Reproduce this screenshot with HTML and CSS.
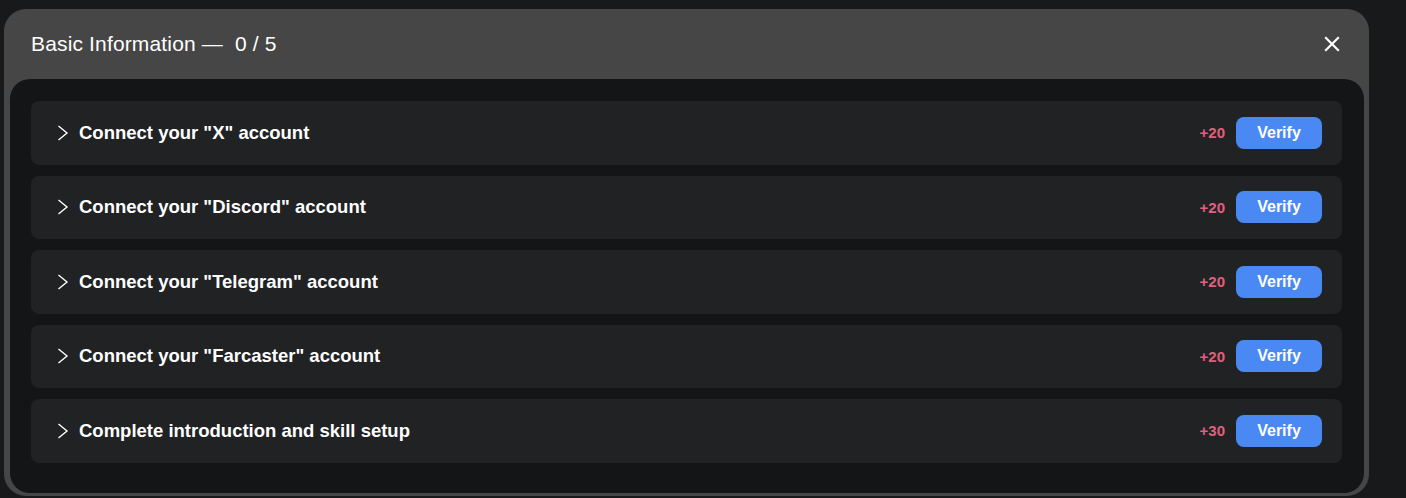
FILE: index.html
```html
<!DOCTYPE html>
<html lang="en">
<head>
    <meta charset="UTF-8">
    <meta name="viewport" content="width=device-width, initial-scale=1.0">
    <title>Basic Information</title>
    <link rel="stylesheet" href="styles.css">
</head>
<body>
    <div class="modal">
        <div class="modal-header">
            <h2>Basic Information &mdash;&nbsp; 0 / 5</h2>
            <button class="modal-close" aria-label="Close">
                <svg width="16" height="16" viewBox="0 0 16 16"><path d="M2 2 L14 14 M14 2 L2 14" stroke="#fff" stroke-width="2.2" stroke-linecap="square"/></svg>
            </button>
        </div>
        <div class="modal-body">
            <div class="task">
                <svg class="chevron" width="12" height="16" viewBox="0 0 12 16"><path d="M1.5 1 L10 8 L1.5 15" fill="none" stroke="#fff" stroke-width="1.4"/></svg>
                <span class="task-title">Connect your "X" account</span>
                <span class="task-points">+20</span>
                <button class="verify">Verify</button>
            </div>
            <div class="task">
                <svg class="chevron" width="12" height="16" viewBox="0 0 12 16"><path d="M1.5 1 L10 8 L1.5 15" fill="none" stroke="#fff" stroke-width="1.4"/></svg>
                <span class="task-title">Connect your "Discord" account</span>
                <span class="task-points">+20</span>
                <button class="verify">Verify</button>
            </div>
            <div class="task">
                <svg class="chevron" width="12" height="16" viewBox="0 0 12 16"><path d="M1.5 1 L10 8 L1.5 15" fill="none" stroke="#fff" stroke-width="1.4"/></svg>
                <span class="task-title">Connect your "Telegram" account</span>
                <span class="task-points">+20</span>
                <button class="verify">Verify</button>
            </div>
            <div class="task">
                <svg class="chevron" width="12" height="16" viewBox="0 0 12 16"><path d="M1.5 1 L10 8 L1.5 15" fill="none" stroke="#fff" stroke-width="1.4"/></svg>
                <span class="task-title">Connect your "Farcaster" account</span>
                <span class="task-points">+20</span>
                <button class="verify">Verify</button>
            </div>
            <div class="task">
                <svg class="chevron" width="12" height="16" viewBox="0 0 12 16"><path d="M1.5 1 L10 8 L1.5 15" fill="none" stroke="#fff" stroke-width="1.4"/></svg>
                <span class="task-title">Complete introduction and skill setup</span>
                <span class="task-points">+30</span>
                <button class="verify">Verify</button>
            </div>
        </div>
    </div>
</body>
</html>
```

FILE: styles.css
```css
* {
    margin: 0;
    padding: 0;
    box-sizing: border-box;
}

body {
    font-family: 'Liberation Sans', Arial, sans-serif;
    background-color: #18191b;
    color: #fff;
    padding: 9px 0 0 4px;
    height: 498px;
    overflow: hidden;
}

.modal {
    width: 1365px;
    height: 487px;
    background-color: #464646;
    border-radius: 22px;
    padding: 0 5px 3px 6px;
    display: flex;
    flex-direction: column;
}

.modal-header {
    height: 70px;
    display: flex;
    align-items: center;
    justify-content: space-between;
    padding: 0 20px 0 21px;
}

.modal-header h2 {
    font-size: 21px;
    font-weight: normal;
    letter-spacing: 0.15px;
    color: #fff;
}

.modal-close {
    background: none;
    border: none;
    cursor: pointer;
    width: 24px;
    height: 24px;
    display: flex;
    align-items: center;
    justify-content: center;
}

.modal-body {
    flex: 1;
    background-color: #141517;
    border-radius: 20px;
    padding: 22px 22px 0 21px;
    display: flex;
    flex-direction: column;
    gap: 11px;
}

.task {
    height: 63.5px;
    background-color: #212224;
    border-radius: 8px;
    display: flex;
    align-items: center;
    padding: 0 20px 0 26px;
}

.chevron {
    margin-right: 10px;
}

.task-title {
    flex: 1;
    font-size: 18.5px;
    font-weight: bold;
}

.task-points {
    color: #e0607e;
    font-size: 15px;
    font-weight: bold;
    margin-right: 11px;
}

.verify {
    width: 86px;
    height: 32px;
    background-color: #4a89f3;
    color: #fff;
    border: none;
    border-radius: 8px;
    font-family: inherit;
    font-size: 16px;
    font-weight: bold;
    cursor: pointer;
}
```
